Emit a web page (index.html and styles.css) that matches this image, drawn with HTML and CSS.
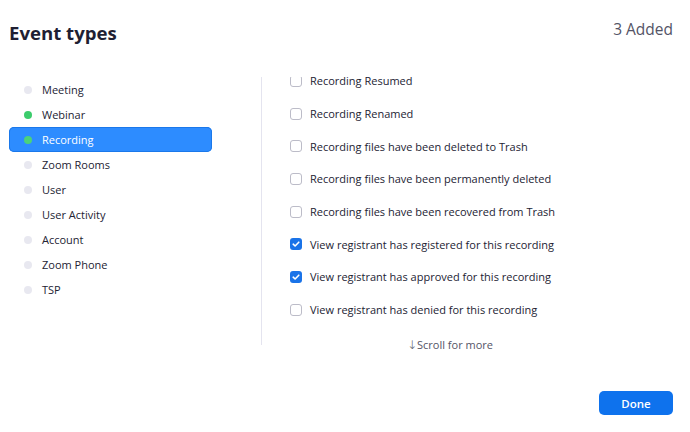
FILE: index.html
```html
<!DOCTYPE html>
<html>
<head>
<meta charset="utf-8">
<link rel="stylesheet" href="styles.css">
</head>
<body>
<div class="dialog">
  <header class="header">
    <h1 class="title">Event types</h1>
    <span class="count">3 Added</span>
  </header>
  <div class="content">
    <ul class="categories">
      <li class="cat"><span class="dot"></span>Meeting</li>
      <li class="cat"><span class="dot on"></span>Webinar</li>
      <li class="cat selected"><span class="dot on"></span>Recording</li>
      <li class="cat"><span class="dot"></span>Zoom Rooms</li>
      <li class="cat"><span class="dot"></span>User</li>
      <li class="cat"><span class="dot"></span>User Activity</li>
      <li class="cat"><span class="dot"></span>Account</li>
      <li class="cat"><span class="dot"></span>Zoom Phone</li>
      <li class="cat"><span class="dot"></span>TSP</li>
    </ul>
    <div class="events">
      <div class="scroller">
        <ul class="event-list">
          <li class="event"><span class="box"></span>Recording Resumed</li>
          <li class="event"><span class="box"></span>Recording Renamed</li>
          <li class="event"><span class="box"></span>Recording files have been deleted to Trash</li>
          <li class="event"><span class="box"></span>Recording files have been permanently deleted</li>
          <li class="event"><span class="box"></span>Recording files have been recovered from Trash</li>
          <li class="event"><span class="box checked"><svg viewBox="0 0 12 12" width="12" height="12"><path d="M3.2 6.2 L5.1 8 L8.8 4.2" fill="none" stroke="#fff" stroke-width="1.6" stroke-linecap="round" stroke-linejoin="round"/></svg></span>View registrant has registered for this recording</li>
          <li class="event"><span class="box checked"><svg viewBox="0 0 12 12" width="12" height="12"><path d="M3.2 6.2 L5.1 8 L8.8 4.2" fill="none" stroke="#fff" stroke-width="1.6" stroke-linecap="round" stroke-linejoin="round"/></svg></span>View registrant has approved for this recording</li>
          <li class="event"><span class="box"></span>View registrant has denied for this recording</li>
        </ul>
      </div>
      <div class="more"><span class="arrow">↓</span>Scroll for more</div>
    </div>
  </div>
  <footer class="footer">
    <button class="done">Done</button>
  </footer>
</div>
</body>
</html>
```

FILE: styles.css
```css
* { box-sizing: border-box; }
html, body { margin: 0; padding: 0; background: #fff; }
body {
  font-family: "Open Sans", "Noto Sans", sans-serif;
  color: #232333;
  width: 690px;
  height: 432px;
  overflow: hidden;
}
.dialog { display: flex; flex-direction: column; height: 432px; }
.header {
  display: flex;
  justify-content: space-between;
  align-items: flex-start;
  padding: 19px 17px 0 9px;
  height: 77px;
  flex: none;
}
.title {
  margin: 0;
  font-size: 18.6px;
  font-weight: 700;
  color: #1f1f33;
  line-height: 28px;
}
.count {
  font-size: 15.5px;
  color: #545466;
  font-weight: 400;
  line-height: 20px;
}
.content {
  display: flex;
  height: 268px;
  flex: none;
}
.categories {
  list-style: none;
  margin: 0;
  padding: 0 0 0 9px;
  width: 262px;
  flex: none;
  border-right: 1px solid #e4e4ef;
}
.cat {
  display: flex;
  align-items: center;
  height: 25px;
  width: 203px;
  padding-left: 15px;
  font-size: 11px;
  color: #232333;
  border-radius: 5px;
}
.cat.selected {
  background: #2d8cff;
  color: #fff;
  box-shadow: inset 0 0 0 1px #1b78ea;
}
.dot {
  width: 8px;
  height: 8px;
  border-radius: 50%;
  background: #e8e8f0;
  margin-right: 10px;
  flex: none;
}
.dot.on { background: #3ccc6c; }
.cat.selected .dot.on { background: #4cd27a; }
.events {
  flex: 1;
  display: flex;
  flex-direction: column;
}
.scroller {
  height: 250px;
  flex: none;
  overflow: hidden;
}
.event-list {
  list-style: none;
  margin: -12.5px 0 0 0;
  padding: 0 0 0 28px;
}
.event {
  display: flex;
  align-items: center;
  height: 32.7px;
  font-size: 11px;
  color: #232333;
}
.box {
  width: 12px;
  height: 12px;
  border: 1px solid #bcbcc8;
  border-radius: 3px;
  margin-right: 8px;
  flex: none;
  display: flex;
  background: #fff;
}
.box.checked {
  border: none;
  background: #1a73e8;
}
.box svg { display: block; }
.more {
  text-align: center;
  font-size: 11px;
  line-height: 15px;
  color: #545466;
  padding-top: 10px;
  padding-right: 52px;
}
.arrow {
  font-family: "DejaVu Sans", sans-serif;
  font-size: 12px;
  font-weight: 300;
}
.footer {
  display: flex;
  justify-content: flex-end;
  padding: 46px 17px 0 0;
}
.done {
  width: 74px;
  height: 24px;
  border: none;
  border-radius: 5px;
  background: #0e72ed;
  color: #fff;
  font-family: "Open Sans", "Noto Sans", sans-serif;
  font-size: 11.5px;
  font-weight: 600;
  padding: 0;
}
```
